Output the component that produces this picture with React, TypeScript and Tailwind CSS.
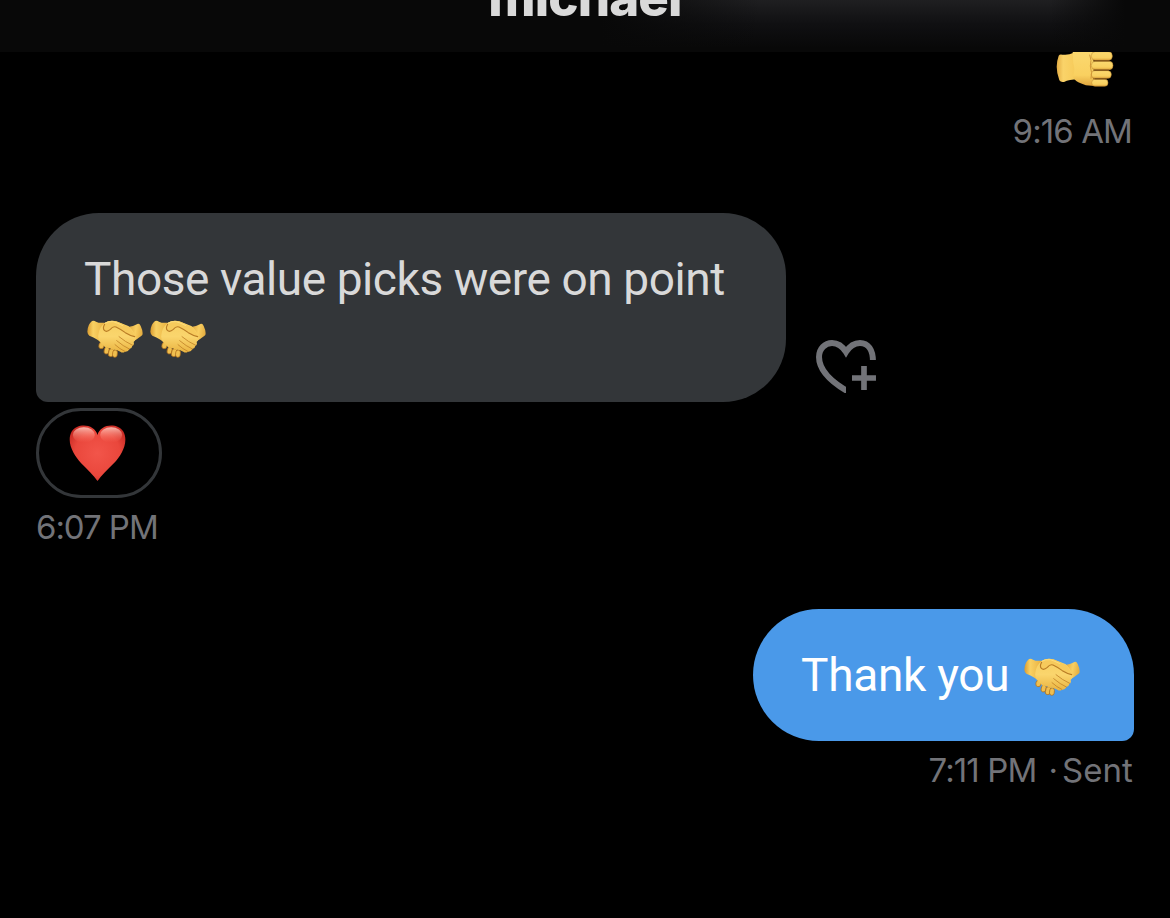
import React from "react";

function Handshake({ className = "" }: { className?: string }) {
  return (
    <svg viewBox="21 32 168 114" className={`h-[38px] w-[56px] shrink-0 ${className}`} aria-hidden="true">
      <defs>
        <linearGradient id="skin" x1="0" y1="0" x2="0" y2="1">
          <stop offset="0" stopColor="#f7cf61" />
          <stop offset="0.5" stopColor="#fad56d" />
          <stop offset="1" stopColor="#eab441" />
        </linearGradient>
        <linearGradient id="wristLeft" x1="0" y1="0" x2="1" y2="0">
          <stop offset="0" stopColor="#d99b2f" />
          <stop offset="0.25" stopColor="#f9d163" />
          <stop offset="0.6" stopColor="#eebb4b" />
          <stop offset="1" stopColor="#d9952f" />
        </linearGradient>
        <linearGradient id="wristRight" x1="0" y1="0" x2="1" y2="0.2">
          <stop offset="0" stopColor="#dca039" />
          <stop offset="0.6" stopColor="#f9cf61" />
          <stop offset="1" stopColor="#e6b043" />
        </linearGradient>
      </defs>
      <path d="M144 53 Q162 50 174 43 Q179 42 182 50 Q190 67 187 77 Q180 83 162 95 L142 80Z" fill="url(#wristRight)" />
      <path d="M36 35 Q42 32 48 37 Q58 42 73 40 L91 95 L68 104 Q54 89 28 79 Q23 76 22 67 Q23 45 36 35Z" fill="url(#wristLeft)" />
      <g fill="#f0bf4f" stroke="#b0701c" strokeWidth="2.2">
        <rect x="57" y="99" width="15" height="19" rx="7.5" transform="rotate(12 64 108)" />
        <rect x="73" y="113" width="14" height="21" rx="7" transform="rotate(15 80 123)" />
        <rect x="86" y="118" width="14" height="24" rx="7" transform="rotate(13 93 130)" />
        <rect x="98" y="122" width="14" height="22" rx="7" transform="rotate(6 105 132)" />
      </g>
      <path d="M73 42 Q82 35 94 34 Q107 34 120 40 L145 50 Q155 56 165 80 Q169 91 161 98 Q164 106 157 110 Q156 117 148 119 Q145 128 135 127 Q128 132 121 127 Q107 119 99 122 Q88 114 78 116 Q71 109 65 103 Q52 91 55 76 Q58 54 73 42Z" fill="url(#skin)" />
      <path d="M73 41 Q84 34 98 34 Q109 34 121 41 L148 54 Q158 66 165 81 Q149 78 137 70 Q117 59 108 54 Q101 51 95 57 Q86 68 76 65 Q68 62 72 52Z" fill="#f6ca5c" />
      <path d="M74 45 Q67 57 73 63 Q80 70 91 60 Q99 50 108 53 Q123 60 136 70 Q149 78 164 82" fill="none" stroke="#b97c25" strokeWidth="3.4" strokeLinecap="round" />
      <path d="M117 82 Q136 98 158 108 M110 94 Q130 111 148 119 M105 106 Q119 119 134 126" fill="none" stroke="#c3852a" strokeWidth="2.6" strokeLinecap="round" />
      <path d="M74 42 Q86 35 100 37 Q113 41 129 49" fill="none" stroke="#ffe387" strokeWidth="2.2" />
    </svg>
  );
}

function Fist() {
  return (
    <svg viewBox="196 36 174 106" className="h-[35.3px] w-[58px]" aria-hidden="true">
      <defs>
        <linearGradient id="fistSkin" x1="0" y1="0" x2="0" y2="1">
          <stop offset="0" stopColor="#fbd970" />
          <stop offset="0.7" stopColor="#f9d060" />
          <stop offset="1" stopColor="#dfa53d" />
        </linearGradient>
        <linearGradient id="fistWrist" x1="0" y1="0" x2="1" y2="0">
          <stop offset="0" stopColor="#e3ac43" />
          <stop offset="0.3" stopColor="#fad369" />
          <stop offset="0.8" stopColor="#f7cc5c" />
          <stop offset="1" stopColor="#e5ae45" />
        </linearGradient>
      </defs>
      <path d="M204 47 Q207 42 215 44 Q235 46 247 39 L263 30 L263 118 Q235 119 220 126 Q210 128 206 121 Q191 82 204 47Z" fill="url(#fistWrist)" />
      <path d="M246 36 Q260 30 307 32 L314 137 Q289 140 270 130 Q255 125 247 112 Q254 90 248 70Z" fill="url(#fistSkin)" />
      <g fill="url(#fistSkin)" stroke="#c08a30" strokeWidth="1.6">
        <rect x="302" y="35" width="63" height="26" rx="12" />
        <rect x="302" y="64" width="65" height="25" rx="12" />
        <rect x="302" y="92" width="60" height="23" rx="11" />
        <rect x="303" y="118" width="49" height="21" rx="10" />
      </g>
      <path d="M308 62.5 H356 M308 90.5 H354 M308 116.5 H348" stroke="#8f5a18" strokeWidth="3" strokeLinecap="round" />
      <path d="M297 44 Q304 62 299 78 Q305 98 301 116" stroke="#d09636" strokeWidth="3" fill="none" />
    </svg>
  );
}

function RedHeart() {
  return (
    <svg viewBox="117 78 170 168" className="h-[56px] w-[57px]" aria-hidden="true">
      <defs>
        <radialGradient id="heartFill" cx="50%" cy="50%" r="62%">
          <stop offset="0" stopColor="#f2554a" />
          <stop offset="0.65" stopColor="#ea473c" />
          <stop offset="1" stopColor="#c42721" />
        </radialGradient>
        <linearGradient id="heartShine" x1="0" y1="0" x2="0" y2="1">
          <stop offset="0" stopColor="#ffd0c5" stopOpacity="0.85" />
          <stop offset="1" stopColor="#ff7461" stopOpacity="0" />
        </linearGradient>
      </defs>
      <path d="M202 108 C194 74 142 70 125 97 C107 128 130 168 153 193 C173 213 190 229 202 246 C214 229 231 213 251 193 C275 168 297 128 279 97 C262 70 210 74 202 108Z" fill="url(#heartFill)" />
      <ellipse cx="161" cy="108" rx="33" ry="23" fill="url(#heartShine)" />
      <ellipse cx="243" cy="108" rx="33" ry="23" fill="url(#heartShine)" />
    </svg>
  );
}

function AddReaction() {
  return (
    <svg viewBox="48 45 180 160" className="h-[53.3px] w-[60px]" fill="none" stroke="#727378" aria-label="Add reaction">
      <defs>
        <clipPath id="heartCut"><path d="M40 40 H232 V105 H138 V210 H40Z" /></clipPath>
      </defs>
      <path d="M150 203 C105 178 57 143 57 96 C57 71 75 54 96 54 C114 54 128 65 138 81 C148 65 162 54 180 54 C204 54 219 74 219 110" strokeWidth="18" strokeMiterlimit="8" clipPath="url(#heartCut)" />
      <path d="M192 123 V195 M156 159 H228" strokeWidth="17" />
    </svg>
  );
}

export default function App() {
  return (
    <main className="flex h-[918px] w-[1170px] flex-col overflow-hidden bg-black font-['Roboto',sans-serif] text-[#d9d9d9]">
      <header className="flex h-[52px] shrink-0 justify-center overflow-hidden bg-[linear-gradient(90deg,#080808_600px,transparent_760px,transparent_1050px,#080808_1125px),linear-gradient(180deg,#1f1f21_0px,#101012_24px,#080808_48px)]">
        <h1 className="-mt-[32px] h-[60px] font-['Inter',sans-serif] text-[51px] leading-[60px] font-extrabold tracking-[-0.9px]">michael</h1>
      </header>

      <section className="flex h-[161px] shrink-0 flex-col items-end pr-[37px]">
        <div className="mr-[19px] flex h-[36px]"><Fist /></div>
        <time className="mt-[21px] mr-[1px] font-['Inter',sans-serif] text-[33px] leading-[44px] tracking-[-0.9px] text-[#727378]">9:16 AM</time>
      </section>

      <section className="flex h-[396px] shrink-0 flex-col items-start pl-9">
        <div className="flex items-end">
          <div className="h-[189px] w-[750px] rounded-[63px] rounded-bl-[12px] bg-[#333639] px-12 pt-9">
            <p className="h-[60px] text-[46px] leading-[60px] tracking-[-0.43px] whitespace-nowrap">Those value picks were on point</p>
            <div className="ml-[3px] flex h-[60px] items-center gap-[7px]"><Handshake /><Handshake /></div>
          </div>
          <div className="ml-[30px] pb-[9px]"><AddReaction /></div>
        </div>
        <div className="mt-[6px] flex h-[90px] w-[126px] items-center justify-center rounded-full border-[3px] border-[#333639] pr-[4px]"><RedHeart /></div>
        <time className="mt-[7px] font-['Inter',sans-serif] text-[33px] leading-[44px] tracking-[-1.05px] text-[#727378]">6:07 PM</time>
      </section>

      <section className="flex flex-col items-end pr-9">
        <div className="flex h-[132px] w-[381px] items-center rounded-[66px] rounded-br-[12px] bg-[#4a99e9] pr-[54px] pl-12 text-white">
          <span className="text-[46px] leading-[60px] tracking-[-0.3px] whitespace-nowrap">Thank you</span>
          <Handshake className="mt-[3px] ml-auto" />
        </div>
        <div className="mt-[7px] mr-[1px] flex font-['Inter',sans-serif] text-[33px] leading-[44px] text-[#727378]">
          <time className="tracking-[-0.9px]">7:11 PM</time><span className="ml-[12px]">·</span><span className="ml-[4px] tracking-[0.1px]">Sent</span>
        </div>
      </section>
    </main>
  );
}
